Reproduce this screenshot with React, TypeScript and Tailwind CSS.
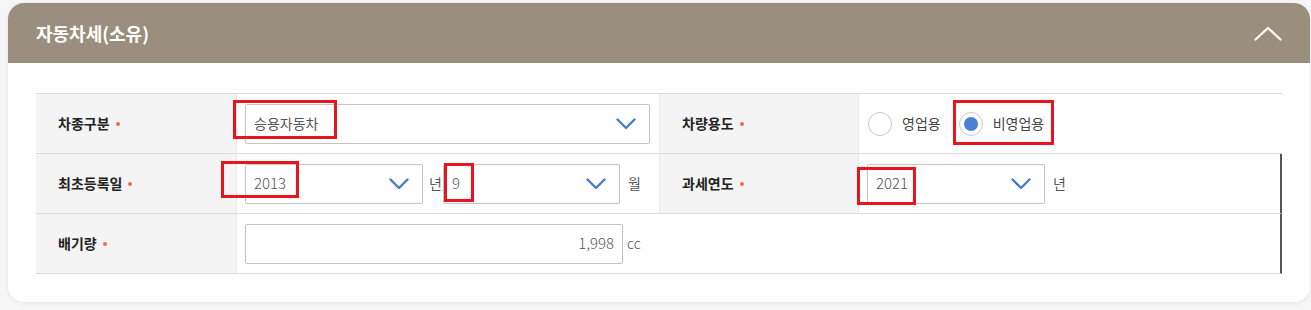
import type { ReactNode } from "react"

const font = { fontFamily: '"Noto Sans CJK KR", "Noto Sans", sans-serif' }

function Chevron({ className = "" }: { className?: string }) {
  return (
    <svg width="20" height="12" viewBox="0 0 20 12" className={className} aria-hidden>
      <path d="M1.5 1.5 L10 10 L18.5 1.5" fill="none" stroke="#4a7bc6" strokeWidth="2.4" strokeLinecap="round" strokeLinejoin="round" />
    </svg>
  )
}

function Label({ children }: { children: ReactNode }) {
  return (
    <div className="flex h-full items-center bg-[#f4f4f4] pl-[22px] text-[14px] font-semibold text-[#222]">
      {children}
      <span className="ml-[6px] h-[4px] w-[4px] rounded-full bg-[#f26d3d]" />
    </div>
  )
}

function Select({ value, width, num }: { value: string; width: string; num?: boolean }) {
  return (
    <div className={`flex h-[40px] ${width} items-center justify-between rounded-[2px] border border-[#c4c4c4] bg-white pl-[8px] pr-[13px] text-[#555] ${num ? "text-[15px] font-light" : "text-[14px]"}`}>
      <span>{value}</span>
      <Chevron />
    </div>
  )
}

function Radio({ label, checked }: { label: string; checked?: boolean }) {
  return (
    <div className="flex items-center gap-[10px]">
      <span className="flex h-[24px] w-[24px] items-center justify-center rounded-full border border-[#c8c8c8] bg-white">
        {checked && <span className="h-[14px] w-[14px] rounded-full bg-[#4a7fd4]" />}
      </span>
      <span className="text-[14px] text-[#444]">{label}</span>
    </div>
  )
}

const marks = [
  "left-[233px] top-[100px] w-[104px] h-[39px]",
  "left-[953px] top-[100px] w-[101px] h-[45px]",
  "left-[221px] top-[161px] w-[78px] h-[37px]",
  "left-[444px] top-[163px] w-[30px] h-[39px]",
  "left-[857px] top-[167px] w-[59px] h-[38px]",
]

export default function App() {
  return (
    <div className="relative h-[310px] w-[1311px] overflow-hidden bg-[#f6f6f6] pl-[8px] pt-[3px]" style={font}>
      <div className="h-[299px] w-[1302px] overflow-hidden rounded-[16px] bg-white shadow-[0_1px_4px_rgba(0,0,0,0.08)]">
        {/* Header */}
        <div className="flex h-[60px] items-center justify-between bg-[#9a8f7e] pl-[28px] pr-[28px]">
          <h2 className="text-[18px] font-bold text-white">자동차세(소유)</h2>
          <svg width="28" height="15" viewBox="0 0 28 15" aria-hidden>
            <path d="M1.5 13.5 L14 2 L26.5 13.5" fill="none" stroke="#fff" strokeWidth="2.2" strokeLinecap="round" strokeLinejoin="round" />
          </svg>
        </div>

        {/* Table */}
        <div className="ml-[28px] mt-[30px] w-[1246px] border-t border-[#dcdcdc]">
          <div className="grid h-[60px] grid-cols-[200px_423px_199px_424px] border-b border-[#dcdcdc]">
            <Label>차종구분</Label>
            <div className="flex items-center border-l border-[#e6e6e6] pl-[8px]">
              <Select value="승용자동차" width="w-[405px]" />
            </div>
            <div className="border-l border-[#e6e6e6]">
              <Label>차량용도</Label>
            </div>
            <div className="flex items-center gap-[18px] border-l border-[#e6e6e6] pl-[9px]">
              <Radio label="영업용" />
              <Radio label="비영업용" checked />
            </div>
          </div>

          <div className="grid h-[60px] grid-cols-[200px_423px_199px_424px] border-b border-r-2 border-[#dcdcdc] border-r-[#555]">
            <Label>최초등록일</Label>
            <div className="flex items-center border-l border-[#e6e6e6] pl-[8px] text-[14px] text-[#555]">
              <Select value="2013" width="w-[178px]" num />
              <span className="ml-[6px] mr-[1px]">년</span>
              <Select value="9" width="w-[177px]" num />
              <span className="ml-[8px]">월</span>
            </div>
            <div className="border-l border-[#e6e6e6]">
              <Label>과세연도</Label>
            </div>
            <div className="flex items-center border-l border-[#e6e6e6] pl-[8px] text-[14px] text-[#555]">
              <Select value="2021" width="w-[178px]" num />
              <span className="ml-[8px]">년</span>
            </div>
          </div>

          <div className="grid h-[60px] grid-cols-[200px_1fr] border-b border-r-2 border-[#dcdcdc] border-r-[#555]">
            <Label>배기량</Label>
            <div className="flex items-center border-l border-[#e6e6e6] pl-[8px] text-[#555]">
              <div className="flex h-[40px] w-[378px] items-center justify-end rounded-[2px] border border-[#c4c4c4] bg-white pr-[8px] text-[15px] font-light">
                1,998
              </div>
              <span className="ml-[4px] text-[14px] font-light">cc</span>
            </div>
          </div>
        </div>
      </div>

      {marks.map((m) => (
        <div key={m} className={`pointer-events-none absolute border-[3px] border-[#e8151f] ${m}`} />
      ))}
    </div>
  )
}
